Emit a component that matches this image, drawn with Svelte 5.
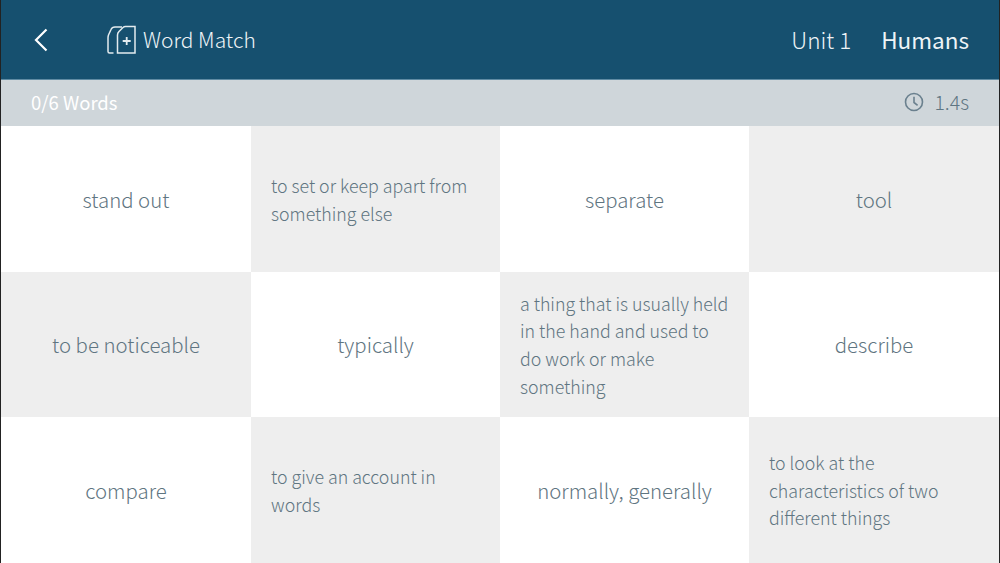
<script lang="ts">
    type Card = { text: string; long?: boolean };

    const cards: Card[] = [
        { text: "stand out" },
        { text: "to set or keep apart from something else", long: true },
        { text: "separate" },
        { text: "tool" },
        { text: "to be noticeable" },
        { text: "typically" },
        { text: "a thing that is usually held in the hand and used to do work or make something", long: true },
        { text: "describe" },
        { text: "compare" },
        { text: "to give an account in words", long: true },
        { text: "normally, generally" },
        { text: "to look at the characteristics of two different things", long: true },
    ];

    // checkerboard: grey on odd (row + col)
    function isGrey(i: number) {
        return (Math.floor(i / 4) + (i % 4)) % 2 === 1;
    }
</script>

<div class="screen">
    <header class="topbar">
        <button class="back" aria-label="Back">
            <svg width="14" height="24" viewBox="0 0 14 24" fill="none" stroke="#fff" stroke-width="2.2">
                <path d="M12.500 1.500 2 12l10.500 10.500" />
            </svg>
        </button>
        <svg class="deck" width="30" height="30" viewBox="0 0 30 30" fill="none" stroke="#e3ebef" stroke-width="1.500">
            <path d="M10.500 28V10Q10.500 8 12 6.500L16 2.500Q17 1.500 18.500 1.500H28V28z" />
            <path d="M6.500 28H2.500Q1 28 1 26.500V13Q1 11.500 1.500 10L4 4.500Q5 2 8 2h7" />
            <path d="M19.700 12v8M15.700 16h8" stroke-width="1.800" />
        </svg>
        <span class="title">Word Match</span>
        <span class="unit">Unit 1</span>
        <span class="topic">Humans</span>
    </header>

    <div class="status">
        <span class="count">0/6 Words</span>
        <span class="timer">
            <svg width="20" height="20" viewBox="0 0 20 20" fill="none" stroke="#6a808e" stroke-width="1.600">
                <circle cx="10" cy="10" r="8.500" />
                <path d="M10 4.800V10.500l3.600 2.800" />
            </svg>
            1.4s
        </span>
    </div>

    <div class="grid">
        {#each cards as card, i}
            <div class="card" class:grey={isGrey(i)} class:long={card.long}>
                <span>{card.text}</span>
            </div>
        {/each}
    </div>
</div>

<style>
    :global(body) {
        margin: 0;
    }

    .screen {
        width: 1000px;
        height: 563px;
        box-sizing: border-box;
        border-left: 1px solid #222;
        border-right: 1px solid #222;
        overflow: hidden;
        display: flex;
        flex-direction: column;
        font-family: "Noto Sans CJK SC", "Open Sans", sans-serif;
        font-weight: 300;
        background: #fff;
    }

    .topbar {
        height: 79px;
        flex: none;
        display: flex;
        align-items: center;
        background: #16506f;
        color: #eef4f7;
        padding: 0 30px 0 33px;
        border-bottom: 1px solid #5f8ba3;
        line-height: 1;
    }

    .back {
        display: flex;
        padding: 0;
        border: 0;
        background: none;
    }

    .deck {
        margin-left: 59px;
    }

    .title {
        margin-left: 6px;
        font-size: 21px;
    }

    .unit {
        margin-left: auto;
        font-size: 22.500px;
    }

    .topic {
        margin-left: 30px;
        font-size: 22.500px;
        font-weight: 400;
    }

    .status {
        height: 46px;
        box-sizing: border-box;
        padding: 0 30px 2px;
        flex: none;
        display: flex;
        align-items: center;
        justify-content: space-between;
        background: #cfd6da;
        font-size: 18.500px;
        line-height: 1;
    }

    .count {
        color: #fff;
        font-weight: 400;
    }

    .timer {
        display: flex;
        align-items: center;
        gap: 10px;
        color: #5f7683;
        font-size: 19.500px;
    }

    .grid {
        flex: 1;
        display: grid;
        grid-template-columns: 250px 249px 249px 250px;
        grid-template-rows: 146px 145px 146px;
    }

    .card {
        display: flex;
        align-items: center;
        justify-content: center;
        text-align: center;
        font-size: 20.400px;
        line-height: 1;
        color: #5f7581;
        background: #fff;
    }

    .card.grey {
        background: #eeeeee;
    }

    .card.long {
        justify-content: flex-start;
        text-align: left;
        padding: 1px 20px 0;
        font-size: 17.800px;
        line-height: 27.700px;
    }
</style>
